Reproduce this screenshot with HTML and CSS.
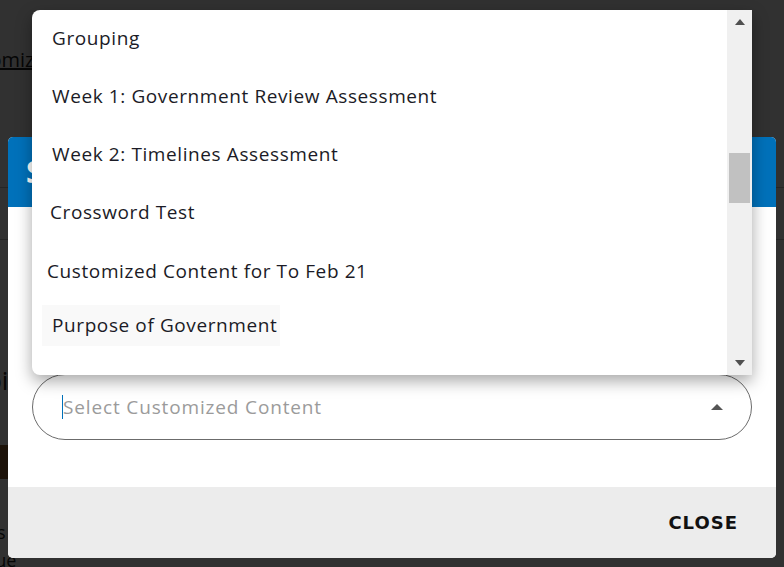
FILE: index.html
```html
<!DOCTYPE html>
<html lang="en">
<head>
    <meta charset="UTF-8">
    <meta name="viewport" content="width=device-width, initial-scale=1.0">
    <title>Select Customized Content</title>
    <link rel="stylesheet" href="styles.css">
</head>
<body>

<!-- Page behind the dialog -->
<div class="page">
    <div class="page-link">Customize</div>
    <div class="page-rule rule-1"></div>
    <div class="page-rule rule-2"></div>
    <div class="page-heading">Topic</div>
    <div class="page-thumb"></div>
    <div class="page-text text-1">Notes</div>
    <div class="page-text text-2">Queue</div>
</div>

<div class="scrim"></div>

<div class="modal">
    <div class="modal-header">S</div>
    <div class="modal-body">
        <div class="select-box">
            <span class="caret"></span>
            <span class="placeholder">Select Customized Content</span>
            <span class="arrow-up"></span>
        </div>
    </div>
    <div class="modal-footer">
        <button class="close-btn">CLOSE</button>
    </div>
</div>

<!-- Open dropdown list -->
<div class="dropdown">
    <ul class="options">
        <li class="option">Grouping</li>
        <li class="option">Week 1: Government Review Assessment</li>
        <li class="option">Week 2: Timelines Assessment</li>
        <li class="option shift-1">Crossword Test</li>
        <li class="option shift-2">Customized Content for To Feb 21</li>
        <li class="option hovered">Purpose of Government</li>
    </ul>
    <div class="scrollbar">
        <span class="sb-arrow sb-up"></span>
        <div class="sb-track">
            <div class="sb-thumb"></div>
        </div>
        <span class="sb-arrow sb-down"></span>
    </div>
</div>

</body>
</html>
```

FILE: styles.css
```css
body {
    margin: 0;
    width: 784px;
    height: 567px;
    overflow: hidden;
    position: relative;
    font-family: "Open Sans", sans-serif;
    background-color: #f4f4f4;
}

/* page behind the dialog */
.page {
    position: absolute;
    inset: 0;
    color: #222;
}

.page-link {
    position: absolute;
    left: -52px;
    top: 46px;
    font-size: 20px;
    text-decoration: underline;
}

.page-rule {
    position: absolute;
    left: 0;
    right: 0;
    height: 1px;
    background-color: #bbb;
}

.rule-1 { top: 187px; }
.rule-2 { top: 239px; }

.page-heading {
    position: absolute;
    left: -44px;
    top: 362px;
    font-size: 26px;
}

.page-thumb {
    position: absolute;
    left: 0;
    top: 445px;
    width: 20px;
    height: 34px;
    background-color: #8a5a30;
}

.page-text {
    position: absolute;
    font-size: 18px;
}

.text-1 { left: -44px; top: 520px; }
.text-2 { left: -40px; top: 548px; }

.scrim {
    position: absolute;
    inset: 0;
    background-color: rgba(0, 0, 0, 0.8);
}

/* dialog */
.modal {
    position: absolute;
    left: 8px;
    top: 137px;
    width: 768px;
    height: 421px;
    border-radius: 5px;
    overflow: hidden;
    background-color: #fff;
    display: flex;
    flex-direction: column;
}

.modal-header {
    height: 70px;
    background-color: #0071ba;
    color: #fff;
    font-size: 30px;
    font-weight: bold;
    line-height: 70px;
    padding-left: 18px;
}

.modal-body {
    flex: 1;
    padding: 167px 24px 0 24px;
}

.select-box {
    height: 64px;
    border: 1px solid #6b6b6b;
    border-radius: 33px;
    display: flex;
    align-items: center;
    padding-left: 29px;
    padding-right: 28px;
}

.caret {
    width: 1px;
    height: 24px;
    background-color: #0071ba;
}

.placeholder {
    flex: 1;
    color: #9b9b9b;
    font-size: 19px;
    letter-spacing: 0.85px;
}

.arrow-up {
    width: 0;
    height: 0;
    border-left: 6px solid transparent;
    border-right: 6px solid transparent;
    border-bottom: 6px solid #555;
}

.modal-footer {
    height: 71px;
    background-color: #ececec;
    display: flex;
    justify-content: flex-end;
    align-items: center;
}

.close-btn {
    font-family: "DejaVu Sans", sans-serif;
    font-weight: bold;
    font-size: 18px;
    letter-spacing: 1px;
    color: #111;
    background: none;
    border: none;
    padding: 0 38px 0 0;
}

/* dropdown */
.dropdown {
    position: absolute;
    left: 32px;
    top: 10px;
    width: 720px;
    height: 365px;
    background-color: #fff;
    border-radius: 8px 0 0 8px;
    box-shadow: 0 6px 16px rgba(0, 0, 0, 0.35);
    display: flex;
}

.options {
    flex: 1;
    list-style: none;
    margin: 0;
    padding: 8px 0 0 0;
    color: #1b1b26;
    font-size: 19px;
    letter-spacing: 0.6px;
}

.option {
    height: 58px;
    line-height: 40px;
    padding-left: 20px;
}

.shift-1 { padding-left: 18px; }
.shift-2 { padding-left: 15px; line-height: 42px; height: 55px; }

.hovered {
    display: inline-block;
    height: 41px;
    line-height: 41px;
    margin-left: 10px;
    padding: 0 3px 0 10px;
    background-color: #f9f9f9;
}

.scrollbar {
    width: 25px;
    background-color: #f0f0f0;
    display: flex;
    flex-direction: column;
    align-items: center;
}

.sb-arrow {
    width: 0;
    height: 0;
    border-left: 5px solid transparent;
    border-right: 5px solid transparent;
    margin: 9px 0;
}

.sb-up { border-bottom: 6px solid #505050; }
.sb-down { border-top: 6px solid #505050; }

.sb-track {
    flex: 1;
    width: 100%;
    padding-top: 119px;
}

.sb-thumb {
    width: 21px;
    height: 50px;
    margin-left: 2px;
    background-color: #c1c1c1;
}
```
